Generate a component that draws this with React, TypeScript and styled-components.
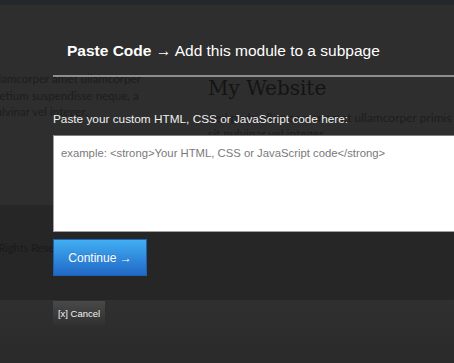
import styled, { createGlobalStyle } from 'styled-components';

const GlobalStyle = createGlobalStyle`
  html, body {
    margin: 0;
    padding: 0;
    background: #2e2e2e;
    overflow: hidden;
  }

  * {
    box-sizing: border-box;
  }
`;

// the website that sits behind the dark overlay

const Page = styled.div`
  position: relative;
  width: 454px;
  height: 363px;
  overflow: hidden;
`;

const Site = styled.div`
  display: flex;
  flex-direction: column;
  height: 100%;
  font-family: Lato, 'Open Sans', sans-serif;
  color: #1d1d1d;
`;

const TopBar = styled.div`
  height: 5px;
  background: #24282c;
`;

const Hero = styled.div`
  display: grid;
  grid-template-columns: 208px 1fr;
  height: 200px;
  background: #2e2e2e;
`;

const SideColumn = styled.div`
  margin-left: -11px;
  padding-top: 66px;
  font-size: 11.6px;
  line-height: 16.5px;
  white-space: nowrap;
`;

const MainColumn = styled.div`
  padding-top: 71px;
  white-space: nowrap;
`;

const SiteTitle = styled.h1`
  margin: 0 0 10px;
  font-family: 'DejaVu Serif', 'Liberation Serif', serif;
  font-weight: normal;
  font-size: 20px;
  line-height: 24px;
  color: #141414;
`;

const SiteLine = styled.div`
  font-size: 12px;
  line-height: 16px;
`;

const Footer = styled.div`
  height: 95px;
  background: #262626;
  display: flex;
  align-items: center;
  padding-bottom: 11px;
  font-size: 11px;
  color: #1a1a1a;
  white-space: nowrap;
`;

const Copyright = styled.span`
  margin-left: -17px;
`;

const Bottom = styled.div`
  flex: 1;
  background: linear-gradient(#303030, #2a2a2a);
`;

// modal laid over the site

const Modal = styled.div`
  position: absolute;
  inset: 0;
  padding: 41px 0 0 53px;
  display: flex;
  flex-direction: column;
  align-items: flex-start;
  font-family: 'Liberation Sans', Arial, sans-serif;
  color: #fff;
`;

const Title = styled.h2`
  margin: 0 0 0 14px;
  font-size: 15.5px;
  font-weight: normal;
  line-height: 20px;
  white-space: nowrap;

  strong {
    font-weight: bold;
  }
`;

const Divider = styled.div`
  align-self: stretch;
  height: 2px;
  margin-top: 14px;
  margin-right: -20px;
  background: #8e8e8e;
`;

const Label = styled.label`
  margin-top: 35px;
  font-size: 11.8px;
  line-height: 14px;
  color: #f0f0f0;
  white-space: nowrap;
`;

const CodeArea = styled.textarea`
  width: 440px;
  height: 97px;
  margin-top: 9px;
  padding: 10px 7px;
  border: 1px solid #a0a0a0;
  border-top-color: #808080;
  background: #fff;
  resize: none;
  font-family: 'Liberation Sans', Arial, sans-serif;
  font-size: 11.3px;
  line-height: 14px;
  color: #333;
  outline: none;

  &::placeholder {
    color: #7a7a7a;
  }
`;

const ContinueButton = styled.button`
  width: 94px;
  height: 37px;
  margin-top: 7px;
  border: 1px solid #1f62b0;
  background: linear-gradient(#41aef3, #2168c6);
  color: #fff;
  font-family: 'Liberation Sans', Arial, sans-serif;
  font-size: 12px;
  text-shadow: 0 -1px 0 rgba(0, 0, 0, 0.15);
  cursor: pointer;
`;

const CancelButton = styled.button`
  width: 52px;
  height: 26px;
  margin-top: 25px;
  border: none;
  background: linear-gradient(#494949, #2e2e2e);
  color: #f2f2f2;
  font-family: 'Liberation Sans', Arial, sans-serif;
  font-size: 9.5px;
  padding: 0 0 2px;
  cursor: pointer;
`;

export default function App() {
  return (
    <>
      <GlobalStyle />
      <Page>
        <Site>
          <TopBar />
          <Hero>
            <SideColumn>
              <div>ullamcorper amet ullamcorper</div>
              <div>pretium suspendisse neque, a</div>
              <div>pulvinar vel integer.</div>
            </SideColumn>
            <MainColumn>
              <SiteTitle>My Website</SiteTitle>
              <SiteLine>Sed pede ullamcorper amet ullamcorper primis</SiteLine>
              <SiteLine>sit pulvinar vel integer.</SiteLine>
            </MainColumn>
          </Hero>
          <Footer>
            <Copyright>All Rights Reserved.</Copyright>
          </Footer>
          <Bottom />
        </Site>

        <Modal>
          <Title>
            <strong>Paste Code</strong> → Add this module to a subpage
          </Title>
          <Divider />
          <Label htmlFor="code">Paste your custom HTML, CSS or JavaScript code here:</Label>
          <CodeArea id="code" placeholder="example: <strong>Your HTML, CSS or JavaScript code</strong>" />
          <ContinueButton>Continue →</ContinueButton>
          <CancelButton>[x] Cancel</CancelButton>
        </Modal>
      </Page>
    </>
  );
}
